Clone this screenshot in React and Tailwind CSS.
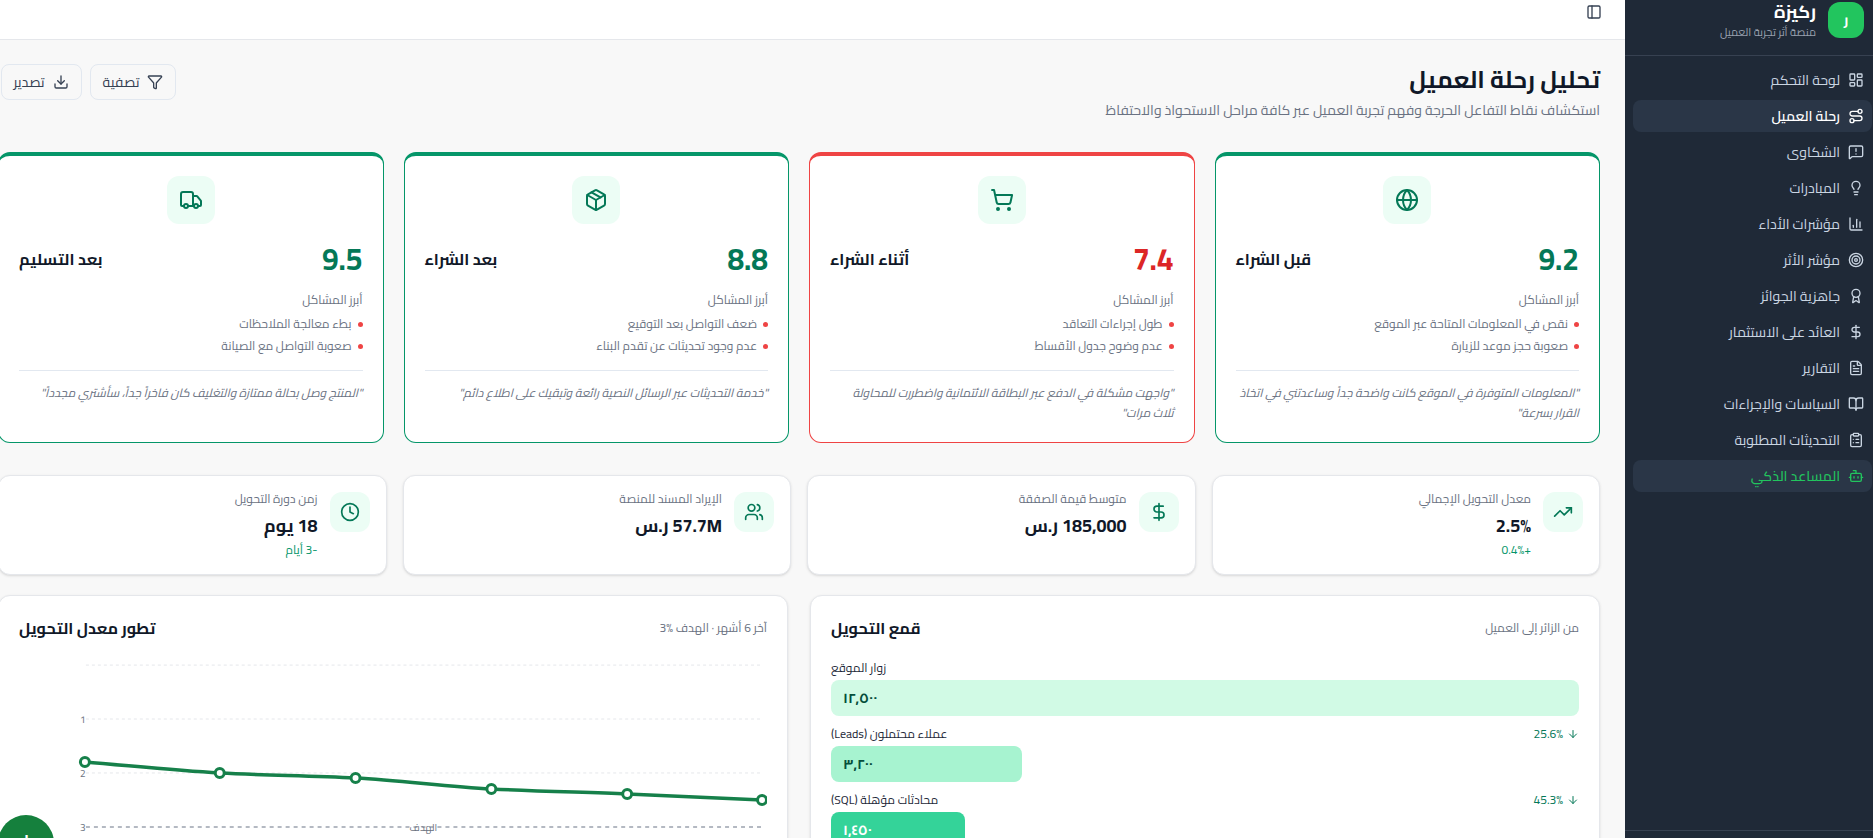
import {
  ArrowDown,
  Award,
  BookOpen,
  Bot,
  ChartColumn,
  ClipboardList,
  Clock,
  DollarSign,
  Download,
  FileText,
  Filter,
  Globe,
  LayoutDashboard,
  Lightbulb,
  MessageSquareWarning,
  Package,
  PanelLeft,
  Route,
  ShoppingCart,
  Target,
  TrendingUp,
  Truck,
  Users,
} from "lucide-react";

const navItems = [
  { label: "لوحة التحكم", icon: LayoutDashboard },
  { label: "رحلة العميل", icon: Route, active: true },
  { label: "الشكاوى", icon: MessageSquareWarning },
  { label: "المبادرات", icon: Lightbulb },
  { label: "مؤشرات الأداء", icon: ChartColumn },
  { label: "مؤشر الأثر", icon: Target },
  { label: "جاهزية الجوائز", icon: Award },
  { label: "العائد على الاستثمار", icon: DollarSign },
  { label: "التقارير", icon: FileText },
  { label: "السياسات والإجراءات", icon: BookOpen },
  { label: "التحديثات المطلوبة", icon: ClipboardList },
  { label: "المساعد الذكي", icon: Bot, ai: true },
];

const stages = [
  {
    title: "قبل الشراء",
    score: "9.2",
    icon: Globe,
    issues: ["نقص في المعلومات المتاحة عبر الموقع", "صعوبة حجز موعد للزيارة"],
    quote: '"المعلومات المتوفرة في الموقع كانت واضحة جداً وساعدتني في اتخاذ القرار بسرعة"',
  },
  {
    title: "أثناء الشراء",
    score: "7.4",
    icon: ShoppingCart,
    bad: true,
    issues: ["طول إجراءات التعاقد", "عدم وضوح جدول الأقساط"],
    quote: '"واجهت مشكلة في الدفع عبر البطاقة الائتمانية واضطررت للمحاولة ثلاث مرات"',
  },
  {
    title: "بعد الشراء",
    score: "8.8",
    icon: Package,
    issues: ["ضعف التواصل بعد التوقيع", "عدم وجود تحديثات عن تقدم البناء"],
    quote: '"خدمة التحديثات عبر الرسائل النصية رائعة وتبقيك على اطلاع دائم"',
  },
  {
    title: "بعد التسليم",
    score: "9.5",
    icon: Truck,
    issues: ["بطء معالجة الملاحظات", "صعوبة التواصل مع الصيانة"],
    quote: '"المنتج وصل بحالة ممتازة والتغليف كان فاخراً جداً، سأشتري مجدداً"',
  },
];

const kpis = [
  { label: "معدل التحويل الإجمالي", value: "2.5%", sub: "+0.4%", icon: TrendingUp },
  { label: "متوسط قيمة الصفقة", value: "185,000 ر.س", icon: DollarSign },
  { label: "الإيراد المسند للمنصة", value: "57.7M ر.س", icon: Users },
  { label: "زمن دورة التحويل", value: "18 يوم", sub: "-3 أيام", icon: Clock },
];

const funnel = [
  { label: "زوار الموقع", value: "١٢,٥٠٠", barClass: "w-full bg-[#d1fae5] text-[#064e3b]" },
  { label: "عملاء محتملون (Leads)", value: "٣,٢٠٠", drop: "25.6%", barClass: "w-[191px] bg-[#a7f3d0] text-[#064e3b]" },
  { label: "محادثات مؤهلة (SQL)", value: "١,٤٥٠", drop: "45.3%", barClass: "w-[134px] bg-[#34d399] text-white" },
];

const points = [
  [66, 112],
  [201, 123],
  [337, 128],
  [473, 139],
  [609, 144],
  [744, 150],
];

function Sidebar() {
  return (
    <aside className="w-[248px] shrink-0 h-full flex flex-col bg-[#1f2937]">
      <div className="flex items-start gap-3 pt-[2px] pr-[9px] pb-[17px] border-b border-[#374151]">
        <div className="size-9 rounded-xl bg-[#22c55e] flex items-center justify-center text-white text-sm font-bold">
          ر
        </div>
        <div className="h-9 -mt-[2px]">
          <div className="text-lg leading-6 font-bold text-white">ركيزة</div>
          <div className="text-[11px] leading-4 text-gray-400">منصة أثر تجربة العميل</div>
        </div>
      </div>
      <nav className="pt-2 pr-px pl-2 flex flex-col gap-1">
        {navItems.map((item) => {
          const Icon = item.icon;
          let cls = "text-slate-300";
          if (item.active) cls = "bg-[#2a3647] text-white font-semibold";
          if (item.ai) cls = "bg-[#2a3647] text-[#22c55e] font-medium";
          return (
            <div key={item.label} className={`h-8 flex items-center gap-2 pr-2 rounded-lg text-sm ${cls}`}>
              <Icon size={16} strokeWidth={2} className="shrink-0" />
              <span>{item.label}</span>
            </div>
          );
        })}
      </nav>
      <div className="mt-auto h-2 border-t border-[#374151]"></div>
    </aside>
  );
}

function StageCard({ stage }) {
  const Icon = stage.icon;
  return (
    <div
      className={`bg-white rounded-xl border border-t-4 p-5 ${
        stage.bad ? "border-[#ef4444]" : "border-[#059669]"
      }`}
    >
      <div className="size-12 mx-auto rounded-xl bg-[#ecfdf5] flex items-center justify-center text-[#047857]">
        <Icon size={24} strokeWidth={2} />
      </div>
      <div className="mt-[17px] flex items-center justify-between">
        <span className={`text-3xl font-bold ${stage.bad ? "text-[#dc2626]" : "text-[#047857]"}`}>
          {stage.score}
        </span>
        <span className="text-base font-bold text-gray-900">{stage.title}</span>
      </div>
      <div className="mt-[15px] text-xs text-gray-500">أبرز المشاكل</div>
      <ul className="mt-2 flex flex-col gap-1.5">
        {stage.issues.map((issue) => (
          <li key={issue} className="flex items-center gap-1.5 text-xs text-gray-500">
            <span className="size-[5px] rounded-full bg-[#ef4444] shrink-0"></span>
            {issue}
          </li>
        ))}
      </ul>
      <p className="mt-4 pt-3 border-t border-slate-200 text-xs leading-[19.5px] italic text-gray-500">
        {stage.quote}
      </p>
    </div>
  );
}

function KpiCard({ kpi }) {
  const Icon = kpi.icon;
  return (
    <div className="h-[100px] bg-white rounded-xl border border-gray-200 shadow-sm p-4 flex items-start gap-3">
      <div className="size-10 rounded-xl bg-[#ecfdf5] flex items-center justify-center text-[#047857] shrink-0">
        <Icon size={20} strokeWidth={2} />
      </div>
      <div className="-mt-px">
        <div className="text-xs text-gray-500">{kpi.label}</div>
        <div className="mt-[5px] text-lg font-bold text-gray-900">{kpi.value}</div>
        {kpi.sub && <div className="mt-0.5 text-xs text-[#059669]">{kpi.sub}</div>}
      </div>
    </div>
  );
}

function CardHeader({ title, note }) {
  return (
    <div className="flex items-center justify-between mb-5">
      <span className="text-xs text-gray-500">{note}</span>
      <h3 className="text-base font-bold text-gray-900">{title}</h3>
    </div>
  );
}

function Funnel() {
  return (
    <div className="bg-white rounded-xl border border-gray-200 shadow-sm p-5">
      <CardHeader title="قمع التحويل" note="من الزائر إلى العميل" />
      <div className="flex flex-col gap-2.5">
        {funnel.map((row) => (
          <div key={row.label}>
            <div className="flex items-center justify-between mb-1 h-4 text-xs">
              <span className="flex items-center gap-1 text-[#047857]">
                {row.drop && <ArrowDown size={12} />}
                {row.drop}
              </span>
              <span className="text-gray-800">{row.label}</span>
            </div>
            <div className="flex justify-end">
              <div className={`h-9 rounded-lg flex items-center justify-end pl-3 text-sm font-bold ${row.barClass}`}>
                {row.value}
              </div>
            </div>
          </div>
        ))}
      </div>
    </div>
  );
}

function TrendChart() {
  return (
    <div className="bg-white rounded-xl border border-gray-200 shadow-sm p-5">
      <CardHeader title="تطور معدل التحويل" note="آخر 6 أشهر · الهدف %3" />
      <svg viewBox="0 0 749 190" className="block w-full h-[190px] -mt-2.5" fill="none">
        {[15, 69, 123].map((y) => (
          <line key={y} x1="67" x2="745" y1={y} y2={y} stroke="#e5e7eb" strokeDasharray="3 3" />
        ))}
        <line x1="67" x2="745" y1="177" y2="177" stroke="#9ca3af" strokeWidth="1.5" strokeDasharray="4 4" />
        <text x="61" y="73" textAnchor="end" fontSize="10" fill="#6b7280">1</text>
        <text x="61" y="127" textAnchor="end" fontSize="10" fill="#6b7280">2</text>
        <text x="61" y="181" textAnchor="end" fontSize="10" fill="#6b7280">3</text>
        <text x="405" y="181" textAnchor="middle" fontSize="10" fill="#6b7280">الهدف</text>
        <path
          d="M66 112C111 115.7 156 120.7 201 123C246.3 125.3 291.7 125.7 337 128C382.3 130.3 427.7 136.7 473 139C518.3 141.3 563.7 142.2 609 144C654 145.8 699 148 744 150"
          stroke="#16804a"
          strokeWidth="3.5"
        />
        {points.map(([x, y]) => (
          <circle key={x} cx={x} cy={y} r="4.5" fill="#fff" stroke="#16804a" strokeWidth="3" />
        ))}
      </svg>
    </div>
  );
}

export default function App() {
  return (
    <div dir="rtl" className="relative flex w-screen h-screen overflow-hidden bg-[#f8f8f8] font-['Cairo','Noto_Sans',sans-serif]">
      <Sidebar />
      <main className="flex-1 min-w-0 overflow-hidden">
        <header className="h-10 bg-white border-b border-gray-200 flex items-start pr-[23px] pt-1">
          <PanelLeft size={16} strokeWidth={2} className="text-gray-700" />
        </header>
        <div className="w-[1602px] mr-[25px] pt-6">
          <div className="flex items-start justify-between mb-8">
            <div>
              <h1 className="text-2xl font-bold text-gray-900">تحليل رحلة العميل</h1>
              <p className="mt-1 text-sm text-gray-500">
                استكشاف نقاط التفاعل الحرجة وفهم تجربة العميل عبر كافة مراحل الاستحواذ والاحتفاظ
              </p>
            </div>
            <div className="flex gap-2 ml-[2.5px]">
              <button className="h-9 px-3 flex items-center gap-2 rounded-lg border border-slate-200 text-sm text-gray-700">
                <Filter size={16} />
                تصفية
              </button>
              <button className="h-9 px-3 flex items-center gap-2 rounded-lg border border-slate-200 text-sm text-gray-700">
                <Download size={16} />
                تصدير
              </button>
            </div>
          </div>

          <div className="grid grid-cols-4 gap-5 mb-8">
            {stages.map((stage) => (
              <StageCard key={stage.title} stage={stage} />
            ))}
          </div>

          <div className="grid grid-cols-4 gap-4 mb-5">
            {kpis.map((kpi) => (
              <KpiCard key={kpi.label} kpi={kpi} />
            ))}
          </div>

          <div className="grid grid-cols-2 gap-[22px]">
            <Funnel />
            <TrendChart />
          </div>
        </div>
      </main>
      <button className="absolute left-[-2px] top-[815px] size-14 rounded-full bg-[#15803d] text-white text-base font-bold flex items-start justify-center pt-2.5">
        ر
      </button>
    </div>
  );
}
